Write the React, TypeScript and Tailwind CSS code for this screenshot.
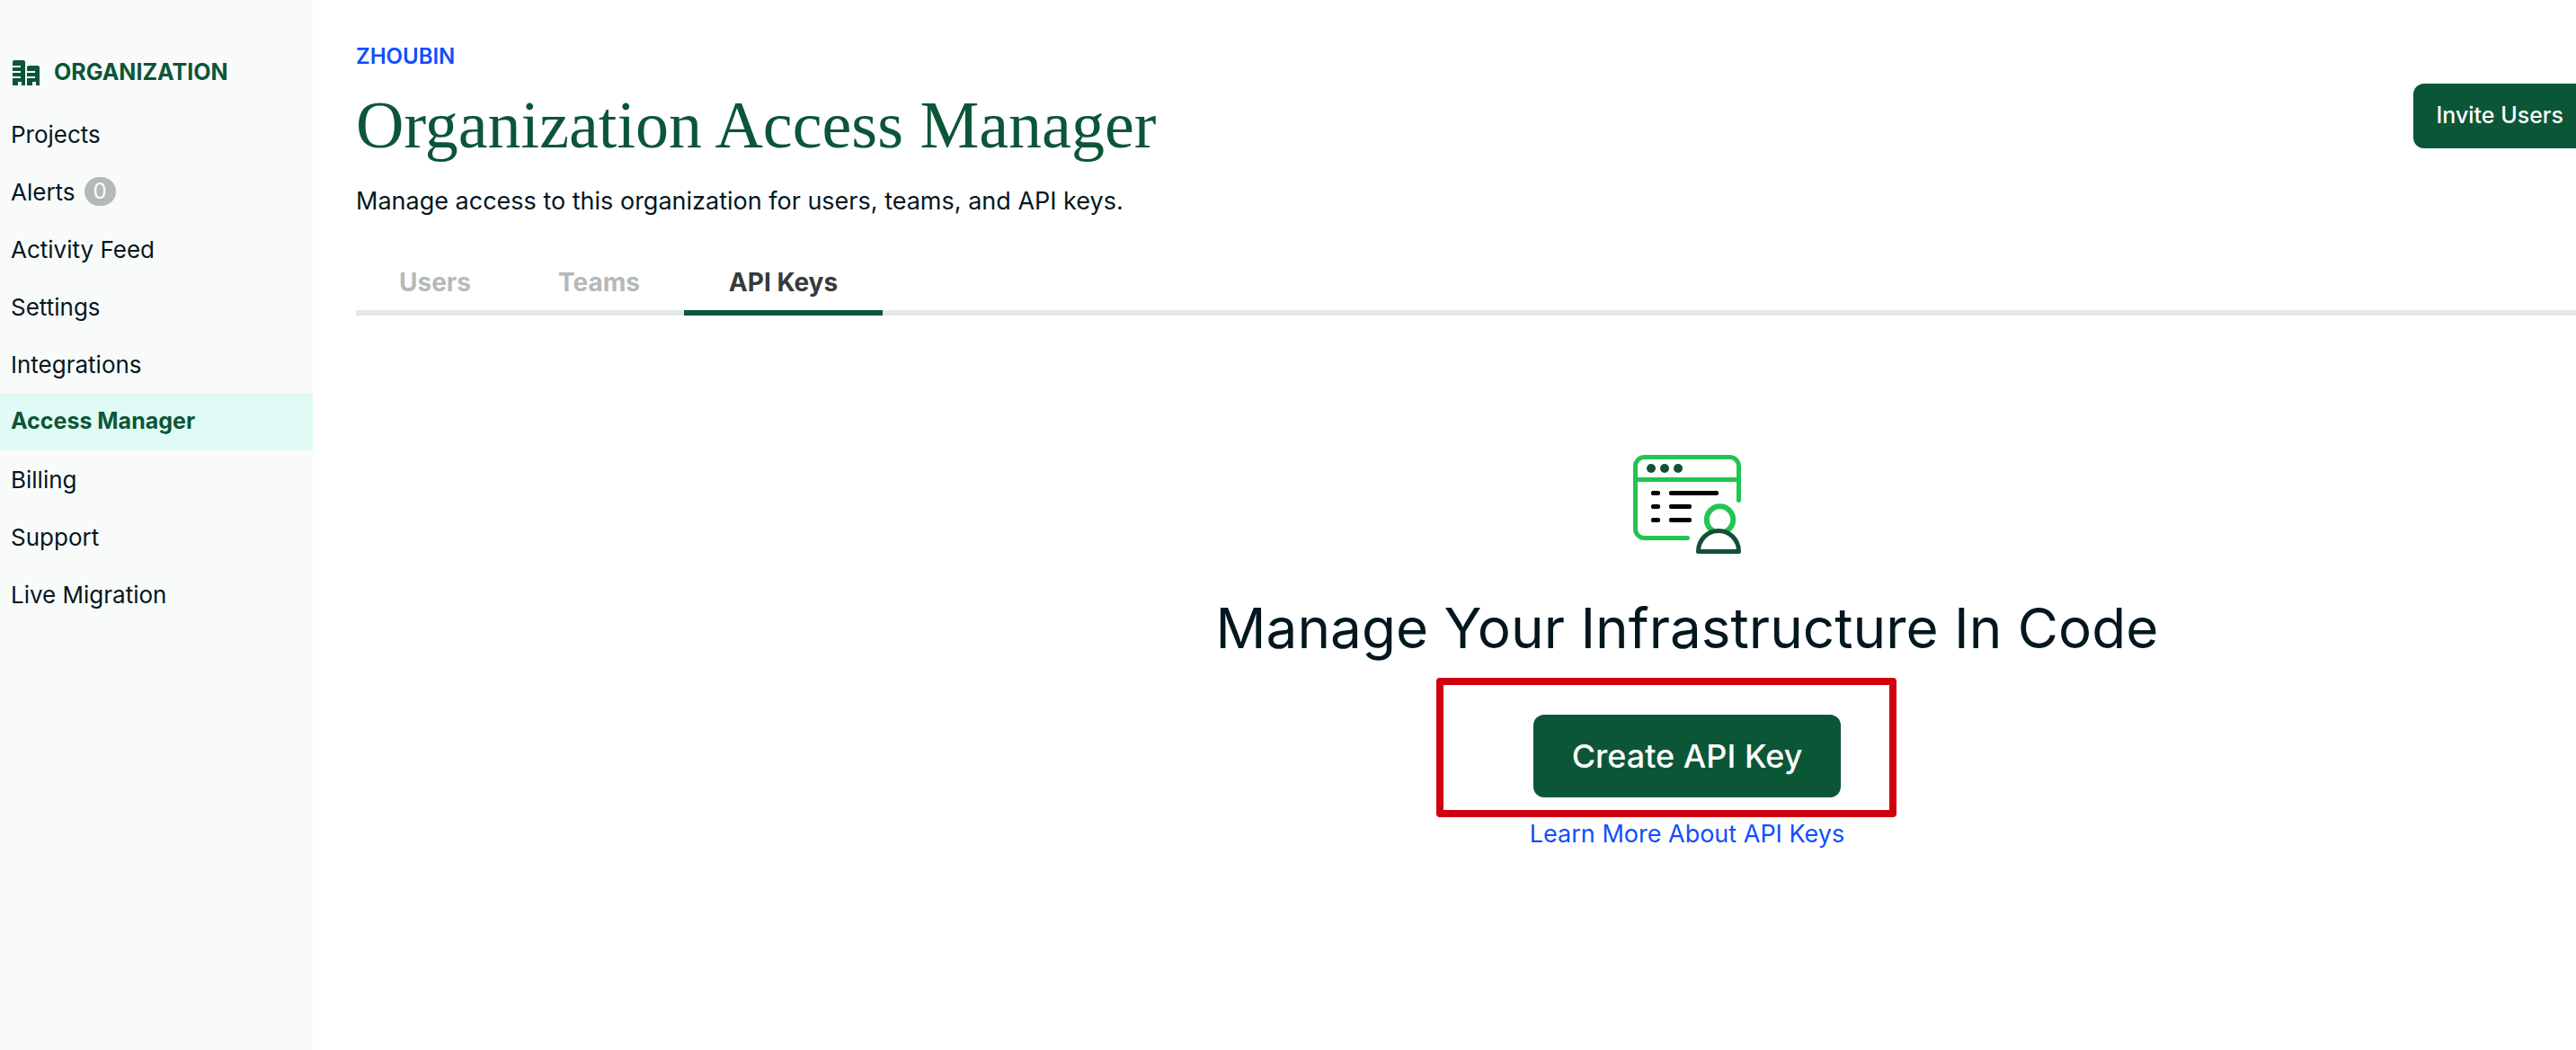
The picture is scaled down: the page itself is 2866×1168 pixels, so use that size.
type NavItem = { label: string; badge?: number; active?: boolean };

const NAV_ITEMS: NavItem[] = [
  { label: "Projects" },
  { label: "Alerts", badge: 0 },
  { label: "Activity Feed" },
  { label: "Settings" },
  { label: "Integrations" },
  { label: "Access Manager", active: true },
  { label: "Billing" },
  { label: "Support" },
  { label: "Live Migration" },
];

const TABS = [
  { label: "Users", active: false, width: "min-w-[176px]" },
  { label: "Teams", active: false, width: "min-w-[189px]" },
  { label: "API Keys", active: true, width: "min-w-[221px]" },
];

function BuildingsIcon() {
  return (
    <svg width="30" height="28" viewBox="0 0 30 28" fill="currentColor" aria-hidden="true">
      <path d="M2 0H12Q14 0 14 2V28H10V24H6V28H0V20H9V18H0V14H9V12H0V8H9V6H0V2Q0 0 2 0Z" />
      <path d="M18 6H28Q30 6 30 8V28H26V24H22V28H16V20H25V18H16V14H25V12H16V8Q16 6 18 6Z" />
    </svg>
  );
}

function ApiKeysIllustration() {
  return (
    <svg width="120" height="110" viewBox="0 0 120 110" fill="none" strokeWidth="5" aria-hidden="true">
      <g stroke="#22c551" strokeLinecap="round">
        <path d="M60.5 92.5H12.5A10 10 0 0 1 2.5 82.5V12.5A10 10 0 0 1 12.5 2.5H107.5A10 10 0 0 1 117.5 12.5V50.5" />
        <path d="M2.5 27.5H117.5" strokeLinecap="butt" />
        <circle cx="96.5" cy="72" r="14.7" strokeWidth="6" />
      </g>
      <g fill="#154f3b">
        <circle cx="20" cy="15" r="5" />
        <circle cx="35" cy="15" r="5" />
        <circle cx="50" cy="15" r="5" />
      </g>
      <g fill="#000">
        <rect x="20" y="40" width="10" height="5" rx="2" />
        <rect x="40" y="40" width="55" height="5" rx="2" />
        <rect x="20" y="55" width="10" height="5" rx="2" />
        <rect x="40" y="55" width="25" height="5" rx="2" />
        <rect x="20" y="70" width="10" height="5" rx="2" />
        <rect x="40" y="70" width="25" height="5" rx="2" />
      </g>
      <path
        d="M72.5 107.5C72.5 94.5 82.5 84.5 95 84.5S117.5 94.5 117.5 107.5Z"
        fill="#fff"
        stroke="#154f3b"
        strokeLinejoin="round"
      />
    </svg>
  );
}

function Sidebar() {
  return (
    <aside className="w-[348px] shrink-0 bg-[#f9fbfa] pt-[45px]">
      <h2 className="flex h-[72px] items-center gap-4 pl-[14px] text-[25px] font-bold text-[#0c5638]">
        <BuildingsIcon />
        ORGANIZATION
      </h2>
      <nav aria-label="Organization">
        <ul>
          {NAV_ITEMS.map((item) => (
            <li key={item.label}>
              <a
                href="#"
                aria-current={item.active ? "page" : undefined}
                className={
                  item.active
                    ? "flex h-16 items-center bg-[#e0fbf5] pl-3 text-[25px] font-bold text-[#0c5638]"
                    : "flex h-16 items-center gap-2.5 pl-3 text-[26px]"
                }
              >
                {item.label}
                {item.badge !== undefined && (
                  <span className="flex h-8 w-[35px] items-center justify-center rounded-full bg-[#b4bab9] text-2xl text-white">
                    {item.badge}
                  </span>
                )}
              </a>
            </li>
          ))}
        </ul>
      </nav>
    </aside>
  );
}

export default function App() {
  return (
    <div className="flex min-h-screen overflow-x-hidden bg-white font-['Inter',sans-serif] text-[#03171f]">
      <Sidebar />
      <main className="min-w-0 flex-1 pt-[45px] pl-12">
        <header className="flex items-start justify-between">
          <div>
            <a href="#" className="block text-2xl leading-9 font-semibold text-[#104ffb]">
              ZHOUBIN
            </a>
            <h1 className="mt-[18px] font-['Liberation_Serif',serif] text-[74px] leading-[80px] text-[#0c5638]">
              Organization Access Manager
            </h1>
            <p className="mt-[25px] text-[27px] leading-10">
              Manage access to this organization for users, teams, and API keys.
            </p>
          </div>
          <button
            type="button"
            className="mt-12 h-[72px] rounded-l-xl bg-[#0c5638] pr-[14px] pl-[25px] text-[25px] font-medium text-white"
          >
            Invite Users
          </button>
        </header>

        <div role="tablist" className="mt-10 flex border-b-6 border-[#e3e8e6]">
          {TABS.map((tab) => (
            <button
              key={tab.label}
              type="button"
              role="tab"
              aria-selected={tab.active}
              className={`${tab.width} -mb-[6px] border-b-6 px-6 text-[28px] leading-[61px] font-bold ${
                tab.active ? "border-[#0c5638] text-[#363b3b]" : "border-transparent text-[#b4bab9]"
              }`}
            >
              {tab.label}
            </button>
          ))}
        </div>

        <section className="flex flex-col items-center pt-[155px] pl-[492px]">
          <ApiKeysIllustration />
          <h2 className="mt-[43px] text-[62px] leading-[80px]">Manage Your Infrastructure In Code</h2>
          <div className="relative mt-14">
            <button
              type="button"
              className="h-[92px] rounded-xl bg-[#0c5638] px-[43px] text-4xl font-medium text-white"
            >
              Create API Key
            </button>
            <div className="pointer-events-none absolute -top-[41px] -left-[108px] h-[155px] w-[512px] rounded-[4px] border-8 border-[#d0000f]" />
          </div>
          <a href="#" className="mt-[21px] text-[27px] leading-10 text-[#104ffb]">
            Learn More About API Keys
          </a>
        </section>
      </main>
    </div>
  );
}
